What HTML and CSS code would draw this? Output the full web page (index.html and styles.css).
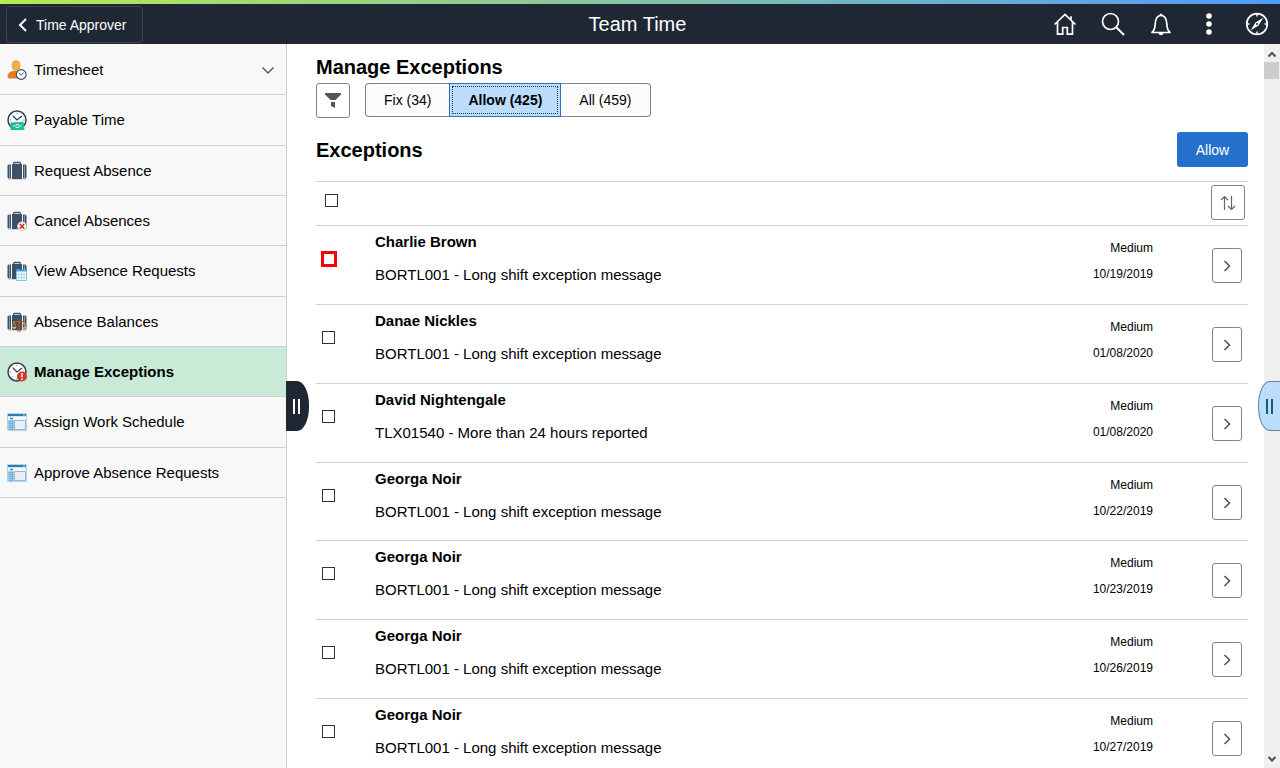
FILE: index.html
```html
<!DOCTYPE html>
<html lang="en">
<head>
<meta charset="utf-8">
<title>Team Time</title>
<link rel="stylesheet" href="styles.css">
</head>
<body>
<svg class="defs" aria-hidden="true">
  <symbol id="i-next" viewBox="0 0 14 14"><path d="M4.500 2l5 5-5 5" fill="none" stroke="#555" stroke-width="1.600"/></symbol>
  <symbol id="i-case" viewBox="0 0 20 20">
    <path d="M6.700 4V2.200Q6.700 1.500 7.400 1.500h5.200Q13.300 1.500 13.300 2.200V4" fill="none" stroke="#3f5468" stroke-width="1.300"/>
    <path d="M5 3h10v15H5zM4 3.500v14H2Q.500 17.500 .500 16V5Q.500 3.500 2 3.500zM16 3.500h2q1.500 0 1.500 1.500v11q0 1.500-1.500 1.500h-2z" fill="#3c5165"/>
    <path d="M2.500 3.500v14M17.500 3.500v14" stroke="#a9b4be" stroke-width=".7"/>
    <path d="M1 18.500h18" stroke="#c9ced3" stroke-width=".8"/>
  </symbol>
  <symbol id="i-clock" viewBox="0 0 20 20">
    <circle cx="10" cy="10" r="9" fill="#fff" stroke="#2e4154" stroke-width="1.500"/>
    <path d="M6 6l4 4 5-4" fill="none" stroke="#2e4154" stroke-width="1.300"/>
    <path d="M10 2.500v1.500M2.500 10H4M16 10h1.500M10 16v1.500M4.700 4.700l.7.7M4.700 15.300l.7-.7" stroke="#7d8b98" stroke-width=".9"/>
  </symbol>
  <symbol id="i-page" viewBox="0 0 20 20">
    <path d="M.5 1.500h19v17H.5z" fill="#d3e4f1" stroke="#b4d2e8"/>
    <path d="M1 2h18v2H1z" fill="#2a7fb8"/><path d="M16 3h2" stroke="#fff" stroke-width=".7"/>
    <path d="M1 5h18v3H1z" fill="#f4f8fb"/><path d="M3 6.500h3" stroke="#2a7fb8" stroke-width="1.400"/>
    <path d="M1.500 8.500h5V18h-5z" fill="#76add3"/><path d="M2 10.500h3M2 12.500h3M2 14.500h3M2 16.500h3" stroke="#b9d8ec" stroke-width=".7"/>
    <path d="M7.500 8.500h11v9h-11z" fill="#e7f0f7" stroke="#8fbbdc"/>
  </symbol>
</svg>
<div class="app">
  <header class="topbar">
    <div class="topbar-side">
      <button class="back" type="button"><svg width="10" height="14" viewBox="0 0 10 14"><path d="M8 1L2 7l6 6" fill="none" stroke="#fff" stroke-width="2"/></svg>Time Approver</button>
    </div>
    <h1 class="topbar-title">Team Time</h1>
    <div class="topbar-side topbar-icons">
      <button type="button" aria-label="Home"><svg viewBox="0 0 24 24"><path d="M1.500 12.500L12 2.500l10.500 10M4.500 10v12.200h5.200v-6.700h4.600v6.700h5.200V10M18 8V4.200" fill="none" stroke="#fff" stroke-width="1.700"/></svg></button>
      <button type="button" aria-label="Search"><svg viewBox="0 0 24 24"><path d="M15.500 15.500L23 23" stroke="#fff" stroke-width="2"/><circle cx="9.500" cy="9.500" r="8" fill="none" stroke="#fff" stroke-width="1.700"/></svg></button>
      <button type="button" aria-label="Notifications"><svg viewBox="0 0 24 24"><path d="M3 20.500c2.500-2 3-4.500 3.200-8.500C6.500 6.500 8 3.500 12 3.500s5.500 3 5.800 8.500c.2 4 .7 6.500 3.200 8.500z" fill="none" stroke="#fff" stroke-width="1.700" stroke-linejoin="round"/><path d="M10.500 3.500q0-2 1.500-2t1.500 2zM9.500 21h5q-.5 2.300-2.500 2.300T9.500 21z" fill="#fff"/></svg></button>
      <button type="button" aria-label="Actions"><svg viewBox="0 0 24 24"><circle cx="12" cy="4" r="2.800" fill="#fff"/><circle cx="12" cy="12" r="2.800" fill="#fff"/><circle cx="12" cy="20" r="2.800" fill="#fff"/></svg></button>
      <button type="button" aria-label="Navigator"><svg viewBox="0 0 24 24"><circle cx="12" cy="12" r="10.300" fill="none" stroke="#fff" stroke-width="1.700"/><path d="M12 2v2.500M12 19.500V22M2 12h2.500M19.500 12H22" stroke="#fff" stroke-width="1.500"/><path d="M18.500 5.500l-5 8L5.500 18.500l5-8z" fill="#fff"/><circle cx="12" cy="12" r="1" fill="#1e2733"/></svg></button>
    </div>
  </header>
  <div class="body">
    <nav class="sidebar">
      <a href="#"><svg viewBox="0 0 20 20"><path d="M.5 16.500Q1 11 7.500 11q6 0 8 4l-2 3.500h-10q-3 0-3-2z" fill="#e67e22"/><ellipse cx="9" cy="5.500" rx="4.500" ry="5.500" fill="#e8b14e"/><circle cx="14.200" cy="14.500" r="4.900" fill="#fff" stroke="#34495e" stroke-width="1.100"/><path d="M11.700 13l2.500 2 2.500-2.200" fill="none" stroke="#34495e"/></svg><span>Timesheet</span><svg class="expand" viewBox="0 0 14 14"><path d="M1.500 4.500L7 10l5.500-5.500" fill="none" stroke="#555" stroke-width="1.400"/></svg></a>
      <a href="#"><svg viewBox="0 0 20 20"><use href="#i-clock"/><path d="M3.500 12.500l13-.8 1 8.300H3.500z" fill="#1abc9c"/><path d="M6 16h2M13 16h2M9 14.500h3v3H9z" fill="none" stroke="#d7f5ee" stroke-width=".9"/></svg><span>Payable Time</span></a>
      <a href="#"><svg viewBox="0 0 20 20"><use href="#i-case"/></svg><span>Request Absence</span></a>
      <a href="#"><svg viewBox="0 0 20 20"><use href="#i-case"/><circle cx="15" cy="15.300" r="4.500" fill="#fff" stroke="#dfa49c" stroke-width=".8"/><path d="M12.800 13l4.400 4.600M17.200 13l-4.400 4.600" stroke="#c83a2c" stroke-width="1.800"/></svg><span>Cancel Absences</span></a>
      <a href="#"><svg viewBox="0 0 20 20"><use href="#i-case"/><path d="M9.500 9.500h10v10h-10z" fill="#fff" stroke="#7fc3ec"/><path d="M9 8.500h11v2H9z" fill="#3f9fd8"/><path d="M11 7.500v2M17.500 7.500v2" stroke="#7fc3ec"/><path d="M12 11v8.500M14.500 11v8.500M17 11v8.500M10 13.500h9.500M10 16.500h9.500" stroke="#7fc3ec" stroke-width=".6"/></svg><span>View Absence Requests</span></a>
      <a href="#"><svg viewBox="0 0 20 20"><use href="#i-case"/><path d="M6 9.500h12M12 7.500V19M10 19h4" fill="none" stroke="#d35400" stroke-width="1.200"/><path d="M7 10l-2 5M7 10l2 5M17 10l-2 5M17 10l2 5" stroke="#e8b14e" stroke-width=".6"/><path d="M4.500 15h5q-.5 2-2.500 2t-2.500-2zM14.500 15h5q-.5 2-2.500 2t-2.500-2z" fill="#e8b14e"/></svg><span>Absence Balances</span></a>
      <a href="#" class="current" aria-current="page"><svg viewBox="0 0 20 20"><use href="#i-clock"/><circle cx="15" cy="14.500" r="5" fill="#d0392b"/><path d="M15 11v4.500M15 16.500v1.500" stroke="#fff" stroke-width="1.400"/></svg><span>Manage Exceptions</span></a>
      <a href="#"><svg viewBox="0 0 20 20"><use href="#i-page"/></svg><span>Assign Work Schedule</span></a>
      <a href="#"><svg viewBox="0 0 20 20"><use href="#i-page"/></svg><span>Approve Absence Requests</span></a>
    </nav>
    <main class="main">
      <h2 class="heading">Manage Exceptions</h2>
      <div class="filters">
        <button class="square" type="button" aria-label="Filter"><svg width="16" height="16" viewBox="0 0 16 16"><path d="M0 0h16v1.500L10.500 7h-5L0 1.500zM6 9h4v6l-4-2z" fill="#555"/></svg></button>
        <div class="segments">
          <button type="button">Fix (34)</button>
          <button type="button" class="selected" aria-pressed="true">Allow (425)</button>
          <button type="button">All (459)</button>
        </div>
      </div>
      <div class="section">
        <h2 class="heading">Exceptions</h2>
        <button class="primary" type="button">Allow</button>
      </div>
      <div class="list-head">
        <input type="checkbox" aria-label="Select all">
        <button class="square" type="button" aria-label="Sort"><svg width="16" height="16" viewBox="0 0 16 16"><path d="M4.500 15V1.500M1 5l3.500-3.500L8 5M11.500 1v13.500M8 11l3.500 3.500L15 11" fill="none" stroke="#666" stroke-width="1.200"/></svg></button>
      </div>
      <ul class="rows">
        <li><input class="flagged" type="checkbox" aria-label="Select Charlie Brown"><div class="who"><strong>Charlie Brown</strong><span>BORTL001 - Long shift exception message</span></div><div class="meta"><span>Medium</span><span>10/19/2019</span></div><button class="go" type="button" aria-label="Open"><svg><use href="#i-next"/></svg></button></li>
        <li><input type="checkbox" aria-label="Select Danae Nickles"><div class="who"><strong>Danae Nickles</strong><span>BORTL001 - Long shift exception message</span></div><div class="meta"><span>Medium</span><span>01/08/2020</span></div><button class="go" type="button" aria-label="Open"><svg><use href="#i-next"/></svg></button></li>
        <li><input type="checkbox" aria-label="Select David Nightengale"><div class="who"><strong>David Nightengale</strong><span>TLX01540 - More than 24 hours reported</span></div><div class="meta"><span>Medium</span><span>01/08/2020</span></div><button class="go" type="button" aria-label="Open"><svg><use href="#i-next"/></svg></button></li>
        <li><input type="checkbox" aria-label="Select Georga Noir"><div class="who"><strong>Georga Noir</strong><span>BORTL001 - Long shift exception message</span></div><div class="meta"><span>Medium</span><span>10/22/2019</span></div><button class="go" type="button" aria-label="Open"><svg><use href="#i-next"/></svg></button></li>
        <li><input type="checkbox" aria-label="Select Georga Noir"><div class="who"><strong>Georga Noir</strong><span>BORTL001 - Long shift exception message</span></div><div class="meta"><span>Medium</span><span>10/23/2019</span></div><button class="go" type="button" aria-label="Open"><svg><use href="#i-next"/></svg></button></li>
        <li><input type="checkbox" aria-label="Select Georga Noir"><div class="who"><strong>Georga Noir</strong><span>BORTL001 - Long shift exception message</span></div><div class="meta"><span>Medium</span><span>10/26/2019</span></div><button class="go" type="button" aria-label="Open"><svg><use href="#i-next"/></svg></button></li>
        <li><input type="checkbox" aria-label="Select Georga Noir"><div class="who"><strong>Georga Noir</strong><span>BORTL001 - Long shift exception message</span></div><div class="meta"><span>Medium</span><span>10/27/2019</span></div><button class="go" type="button" aria-label="Open"><svg><use href="#i-next"/></svg></button></li>
      </ul>
    </main>
    <div class="scrollbar" aria-hidden="true">
      <svg viewBox="0 0 16 17"><path d="M4.500 12L8 8.500l3.500 3.500" fill="none" stroke="#505050" stroke-width="2"/></svg>
      <div class="thumb"></div>
      <svg class="down" viewBox="0 0 16 17"><path d="M4.500 6.500L8 10l3.500-3.500" fill="none" stroke="#505050" stroke-width="2"/></svg>
    </div>
    <button class="handle handle-left" type="button" aria-label="Collapse menu"></button>
    <button class="handle handle-right" type="button" aria-label="Open related panel"></button>
  </div>
</div>
</body>
</html>
```

FILE: styles.css
```css
*, *::before { box-sizing: border-box; }
body {
  margin: 0;
  font: 15px/20px "Liberation Sans", Arial, sans-serif;
  color: #000;
  background: #fff;
}
button { font: inherit; color: inherit; margin: 0; padding: 0; }
svg { display: block; flex: none; }
h1, h2, ul { margin: 0; padding: 0; }
.defs { position: absolute; width: 0; height: 0; }

.app { display: flex; flex-direction: column; height: 100vh; overflow: hidden; }

/* Banner */
.topbar {
  flex: none;
  display: flex;
  align-items: center;
  padding: 6px 6px 1px;
  background: #1e2733;
  color: #fff;
}
.topbar::before {
  content: "";
  position: absolute;
  top: 0;
  left: 0;
  right: 0;
  height: 4px;
  background: linear-gradient(90deg, #b5ea51, #519bfb);
}
.topbar-side { flex: 1; display: flex; }
.topbar-title { padding-bottom: 2px; font-size: 20px; line-height: 24px; font-weight: 400; }
.topbar-icons { justify-content: flex-end; gap: 24px; padding: 0 5px 2px 0; }
.topbar-icons button { border: 0; background: none; }
.topbar-icons svg { width: 24px; height: 24px; }
.back {
  display: flex;
  align-items: center;
  gap: 8px;
  height: 37px;
  padding: 0 15px 0 11px;
  border: 1px solid #3a444f;
  border-radius: 4px;
  background: none;
  font-size: 14px;
}

.body { position: relative; flex: 1; display: flex; min-height: 0; }

/* Side navigation */
.sidebar {
  flex: none;
  width: 287px;
  padding-top: 1px;
  border-right: 1px solid #c9ced6;
  background: #f8f8f8;
}
.sidebar a {
  display: flex;
  align-items: center;
  gap: 7px;
  height: 50px;
  padding: 0 11px 0 7px;
  border-bottom: 1px solid #c9d0d9;
  color: #000;
  text-decoration: none;
}
.sidebar a:nth-child(3n + 2) { height: 51px; }
.sidebar a svg { width: 20px; height: 20px; }
.sidebar a span { flex: 1; }
.sidebar a .expand { width: 14px; height: 14px; }
.sidebar .current { background: #c8ead6; font-weight: 700; }

/* Content */
.main { flex: 1; min-width: 0; padding: 10px 16px 0 29px; }
.heading { font-size: 20px; line-height: 26px; }
.filters { display: flex; gap: 15px; margin: 3px 0 14px; }
.square, .go {
  display: flex;
  align-items: center;
  justify-content: center;
  width: 34px;
  height: 35px;
  border: 1px solid #7c858f;
  border-radius: 3px;
  background: #fff;
}
.segments { display: flex; height: 34px; font-size: 14px; }
.segments button {
  padding: 0 18px;
  border: 1px solid #7c858f;
  background: #fcfcfc;
}
.segments button:first-child { border-right: 0; border-radius: 4px 0 0 4px; }
.segments button:last-child { border-left: 0; border-radius: 0 4px 4px 0; }
.segments .selected {
  border-color: #2470cb;
  background: #bbdcfa;
  font-weight: 700;
  outline: 1px dotted #333;
  outline-offset: -4px;
}
.section { display: flex; align-items: center; justify-content: space-between; }
.primary {
  height: 35px;
  min-width: 71px;
  padding: 0 18px;
  border: 0;
  border-radius: 3px;
  background: #2470cb;
  color: #fff;
  font-size: 14px;
}
input[type="checkbox"] {
  appearance: none;
  width: 13px;
  height: 13px;
  margin: 0;
  border: 1px solid #333;
  background: #fff;
}
.list-head {
  display: flex;
  align-items: flex-start;
  justify-content: space-between;
  margin-top: 14px;
  height: 45px;
  padding: 3px 3px 0 9px;
  border: solid #ced2d9;
  border-width: 1px 0;
}
.list-head input[type="checkbox"] { margin-top: 9px; }
.rows { list-style: none; }
.rows li {
  display: grid;
  grid-template-columns: 54px 1fr auto 30px;
  align-items: start;
  height: 79px;
  padding: 6px 6px 0 5px;
  border-bottom: 1px solid #ced2d9;
}
.rows li:nth-child(4) { height: 78px; }
.rows input[type="checkbox"] { margin: 20px 0 0 1px; }
.rows input.flagged[type="checkbox"] {
  width: 16px;
  height: 16px;
  margin: 19px 0 0;
  border: 3px solid #f00;
}
.who { display: grid; gap: 13px; }
.meta {
  display: grid;
  gap: 6px;
  padding-top: 6px;
  margin-right: 59px;
  font-size: 12px;
  text-align: right;
}
.go { width: 30px; margin-top: 16px; }
.go svg { width: 14px; height: 14px; }

/* Scroll track */
.scrollbar { flex: none; width: 16px; display: flex; flex-direction: column; background: #f0f0f0; }
.scrollbar svg { width: 16px; height: 18px; }
.scrollbar .down { margin-top: auto; }
.thumb { height: 17px; margin-right: 1px; background: #cdcdcd; }

/* Panel handles straddle the pane edges */
.handle {
  position: absolute;
  top: 50%;
  transform: translateY(-50%);
  display: flex;
  align-items: center;
  height: 50px;
}
.handle::before {
  content: "";
  width: 7px;
  height: 15px;
  border: solid currentColor;
  border-width: 0 2px;
}
.handle-left {
  left: 286px;
  width: 23px;
  padding-left: 7px;
  border: 0;
  border-radius: 0 12px 12px 0 / 0 24px 24px 0;
  background: #1e2733;
  color: #fff;
}
.handle-right {
  right: 0;
  width: 22px;
  padding-left: 7px;
  border: 1px solid #67839b;
  border-right: 0;
  border-radius: 12px 0 0 12px / 24px 0 0 24px;
  background: #bbdcfa;
  color: #175a79;
}
```
